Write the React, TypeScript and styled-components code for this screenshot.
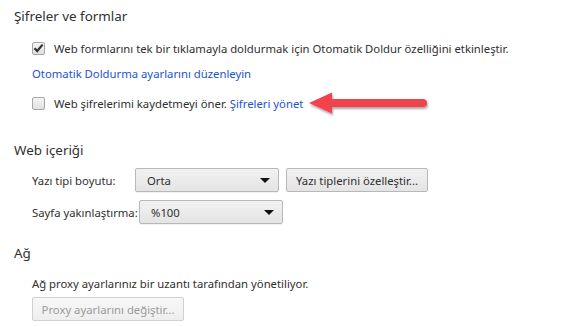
import * as React from 'react';
import styled, { createGlobalStyle } from 'styled-components';

const Global = createGlobalStyle`
  html, body {
    margin: 0;
    padding: 0;
    background: #fff;
  }
  body {
    font-family: 'Noto Sans', 'Open Sans', sans-serif;
    font-size: 11.3px;
    color: #303030;
  }
`;

const Page = styled.div`
  width: 579px;
  height: 327px;
  padding: 6px 0 0 14px;
  box-sizing: border-box;
  overflow: hidden;
`;

const Section = styled.section<{ $top: number }>`
  margin-top: ${p => p.$top}px;
`;

const Heading = styled.h3`
  margin: 0;
  height: 20px;
  line-height: 20px;
  font-size: 13.4px;
  font-weight: normal;
  color: #303030;
`;

const Body = styled.div`
  padding-left: 18px;
  display: flex;
  flex-direction: column;
`;

const Row = styled.div<{ $top: number }>`
  display: flex;
  align-items: center;
  height: 24px;
  margin-top: ${p => p.$top}px;
  white-space: nowrap;
`;

const Box = styled.span<{ $checked?: boolean }>`
  width: 13px;
  height: 13px;
  box-sizing: border-box;
  border: 1px solid #a6a6a6;
  border-radius: 2px;
  background: linear-gradient(#f4f4f4, #e0e0e0);
  margin-right: 9px;
  display: flex;
  align-items: center;
  justify-content: center;
  flex: none;
`;

const Link = styled.a`
  color: #1a55cc;
  text-decoration: none;
  cursor: pointer;
`;

const Label = styled.span<{ $w: number }>`
  width: ${p => p.$w}px;
  flex: none;
`;

const Select = styled.div`
  width: 144px;
  height: 24px;
  box-sizing: border-box;
  border: 1px solid #b8b8b8;
  border-radius: 2px;
  background: linear-gradient(#f1f1f1, #e4e4e4);
  display: flex;
  align-items: center;
  justify-content: space-between;
  padding: 0 8px 0 11px;
  box-shadow: 0 1px 0 rgba(0, 0, 0, 0.05);
  &::after {
    content: '';
    border-left: 5px solid transparent;
    border-right: 5px solid transparent;
    border-top: 5px solid #111;
  }
`;

const Button = styled.button<{ $disabled?: boolean }>`
  height: 24px;
  box-sizing: border-box;
  border: 1px solid ${p => (p.$disabled ? '#d0d0d0' : '#b8b8b8')};
  border-radius: 2px;
  background: ${p => (p.$disabled ? 'linear-gradient(#f8f8f8, #eeeeee)' : 'linear-gradient(#f1f1f1, #e4e4e4)')};
  color: ${p => (p.$disabled ? '#9a9a9a' : '#303030')};
  font: inherit;
  padding: 0;
  white-space: nowrap;
  margin-left: ${p => (p.$disabled ? 0 : 7)}px;
  width: ${p => (p.$disabled ? 152 : 142)}px;
  text-align: center;
`;

const Arrow = styled.svg`
  margin-left: 6px;
  flex: none;
  overflow: visible;
`;

function Check() {
  return (
    <svg width="11" height="10" viewBox="0 0 11 10">
      <path d="M1.5 5.2 L4.2 8 L9.6 1.6" fill="none" stroke="#333" strokeWidth="2.2" />
    </svg>
  );
}

export default function App() {
  return (
    <Page>
      <Global />
      <Section $top={0}>
        <Heading>Şifreler ve formlar</Heading>
        <Body>
          <Row $top={10}>
            <Box $checked>
              <Check />
            </Box>
            Web formlarını tek bir tıklamayla doldurmak için Otomatik Doldur özelliğini etkinleştir.
          </Row>
          <Row $top={1}>
            <Link>Otomatik Doldurma ayarlarını düzenleyin</Link>
          </Row>
          <Row $top={6}>
            <Box />
            Web şifrelerimi kaydetmeyi öner.&nbsp;<Link>Şifreleri yönet</Link>
            <Arrow width="120" height="24" viewBox="0 0 120 24">
              <defs>
                <filter id="sh" x="-10%" y="-40%" width="120%" height="180%">
                  <feDropShadow dx="1" dy="2" stdDeviation="1.2" floodColor="#000" floodOpacity="0.35" />
                </filter>
              </defs>
              <g filter="url(#sh)" fill="#f2434b">
                <path d="M0 12 L23 1.5 L23 22.5 Z" />
                <rect x="18" y="8" width="100" height="8" rx="4" />
              </g>
            </Arrow>
          </Row>
        </Body>
      </Section>
      <Section $top={25}>
        <Heading>Web içeriği</Heading>
        <Body>
          <Row $top={8}>
            <Label $w={103}>Yazı tipi boyutu:</Label>
            <Select>Orta</Select>
            <Button>Yazı tiplerini özelleştir...</Button>
          </Row>
          <Row $top={8}>
            <Label $w={107}>Sayfa yakınlaştırma:</Label>
            <Select>%100</Select>
          </Row>
        </Body>
      </Section>
      <Section $top={19}>
        <Heading>Ağ</Heading>
        <Body>
          <Row $top={8}>Ağ proxy ayarlarınız bir uzantı tarafından yönetiliyor.</Row>
          <Row $top={2}>
            <Button $disabled>Proxy ayarlarını değiştir...</Button>
          </Row>
        </Body>
      </Section>
    </Page>
  );
}
